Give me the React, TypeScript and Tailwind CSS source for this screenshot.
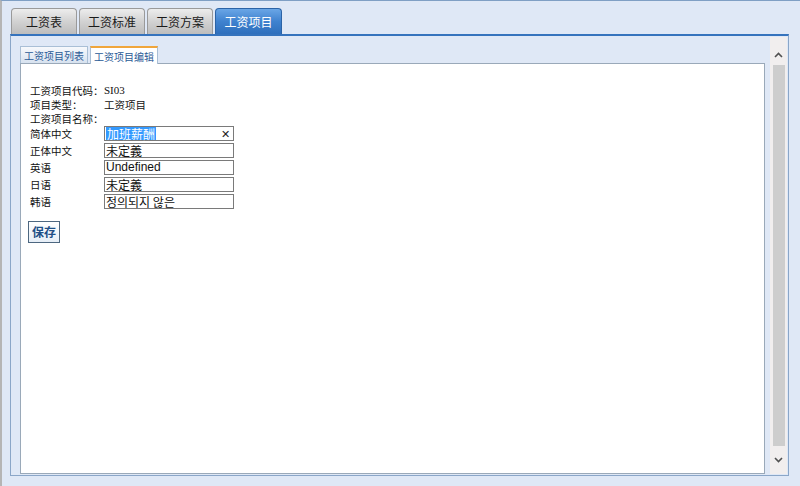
import React from 'react';

const cjk = { fontFamily: '"Noto Sans CJK SC", "Noto Sans", sans-serif' };

const mainTabs = ['工资表', '工资标准', '工资方案', '工资项目'];

function MainTab({ label, active }: { label: string; active?: boolean }) {
  if (active) {
    return (
      <div className="w-[67px] h-[26px] flex items-center justify-center rounded-t-[4px] border border-b-0 border-[#2b63a6] bg-gradient-to-b from-[#6aa6e6] via-[#3f82cf] to-[#2f6fbc] text-white text-[12px]">
        {label}
      </div>
    );
  }
  return (
    <div className="w-[66px] h-[26px] flex items-center justify-center rounded-t-[4px] border border-b-0 border-[#9a9a9a] bg-gradient-to-b from-[#ededed] via-[#d2d2d2] to-[#bdbdbd] text-[#1a1a1a] text-[12px]">
      {label}
    </div>
  );
}

function Field({ value, selected, korean, latin }: { value: string; selected?: boolean; korean?: boolean; latin?: boolean }) {
  const font = korean
    ? { fontFamily: '"Noto Sans CJK KR", sans-serif' }
    : latin
    ? { fontFamily: '"Liberation Sans", sans-serif' }
    : undefined;
  return (
    <div
      className="w-[130px] h-[15px] border border-[#7a7a7a] bg-white flex items-center pl-[1px] text-[12px] leading-[13px] text-[#111] whitespace-nowrap"
      style={font}
    >
      {selected ? (
        <>
          <span className="bg-[#3399ff] text-white px-[1px]">{value}</span>
          <span className="ml-auto mr-[3px] text-[11px] text-[#222]">✕</span>
        </>
      ) : (
        <span>{value}</span>
      )}
    </div>
  );
}

function Row({ label, children }: { label: string; children?: React.ReactNode }) {
  return (
    <div className="flex items-center h-[14px] leading-[13px] whitespace-nowrap">
      <span className="w-[74px]">{label}</span>
      {children}
    </div>
  );
}

function InputRow({ label, children }: { label: string; children: React.ReactNode }) {
  return (
    <div className="flex items-center h-[15px] leading-[14px] whitespace-nowrap">
      <span className="w-[74px]">{label}</span>
      {children}
    </div>
  );
}

export default function App() {
  return (
    <div
      className="w-[800px] h-[486px] overflow-hidden bg-[#dfe8f6] border-t border-l-2 border-t-[#7f9fc4] border-l-[#b5b5b5] pl-[8px] pt-[7px]"
      style={cjk}
    >
      {/* main tab strip */}
      <div className="flex items-end gap-[2px] h-[26px] pl-[1px]">
        {mainTabs.map((t, i) => (
          <MainTab key={t} label={t} active={i === 3} />
        ))}
      </div>

      {/* outer panel */}
      <div className="w-[779px] h-[442px] border-t-2 border-t-[#3573bd] border-x border-b border-x-[#8aa6c8] border-b-[#8aa6c8] flex">
        <div className="flex-1 pl-[9px] pt-[9px] flex flex-col">
          {/* sub tabs */}
          <div className="flex items-end gap-[2px] h-[18px]">
            <div className="w-[68px] h-[17px] border border-b-0 border-[#a9bfd6] bg-gradient-to-b from-[#f7f9fc] to-[#d7e2ef] text-[10px] text-[#2a5a96] flex items-center justify-center">
              工资项目列表
            </div>
            <div className="w-[68px] h-[18px] border-x border-x-[#a9bfd6] border-t-2 border-t-[#f0a63c] bg-white text-[10px] text-[#2a5a96] flex items-center justify-center relative top-[1px]">
              工资项目编辑
            </div>
          </div>

          {/* white content */}
          <div className="w-[745px] flex-1 mb-[1px] border border-[#9aa9b9] bg-white pl-[9px] pt-[19px] text-[10.5px] text-[#111]">
            <Row label="工资项目代码：">
              <span className="text-[11px]" style={{ fontFamily: '"Liberation Serif", serif' }}>SI03</span>
            </Row>
            <Row label="项目类型：">
              <span>工资项目</span>
            </Row>
            <Row label="工资项目名称：" />
            <div className="flex flex-col gap-[2px] mt-[1px]">
              <InputRow label="简体中文">
                <Field value="加班薪酬" selected />
              </InputRow>
              <InputRow label="正体中文">
                <Field value="未定義" />
              </InputRow>
              <InputRow label="英语">
                <Field value="Undefined" latin />
              </InputRow>
              <InputRow label="日语">
                <Field value="未定義" />
              </InputRow>
              <InputRow label="韩语">
                <Field value="정의되지 않은" korean />
              </InputRow>
            </div>
            <button className="mt-[12px] ml-[-2px] w-[32px] h-[22px] border border-[#4d6780] bg-gradient-to-b from-[#ffffff] to-[#e6eef7] text-[12px] font-bold text-[#1f4f86] flex items-center justify-center">
              保存
            </button>
          </div>
        </div>

        {/* scrollbar */}
        <div className="w-[17px] mr-[1px] my-[1px] bg-[#f1eeee] flex flex-col items-center">
          <div className="h-[28px] w-full flex items-center justify-center pt-[8px]">
            <svg width="9" height="6" viewBox="0 0 9 6">
              <path d="M1 5 L4.5 1.5 L8 5" fill="none" stroke="#505050" strokeWidth="1.6" />
            </svg>
          </div>
          <div className="w-[12px] h-[381px] bg-[#cdcdcd]" />
          <div className="flex-1 w-full flex items-center justify-center">
            <svg width="9" height="6" viewBox="0 0 9 6">
              <path d="M1 1 L4.5 4.5 L8 1" fill="none" stroke="#505050" strokeWidth="1.6" />
            </svg>
          </div>
        </div>
      </div>
    </div>
  );
}
